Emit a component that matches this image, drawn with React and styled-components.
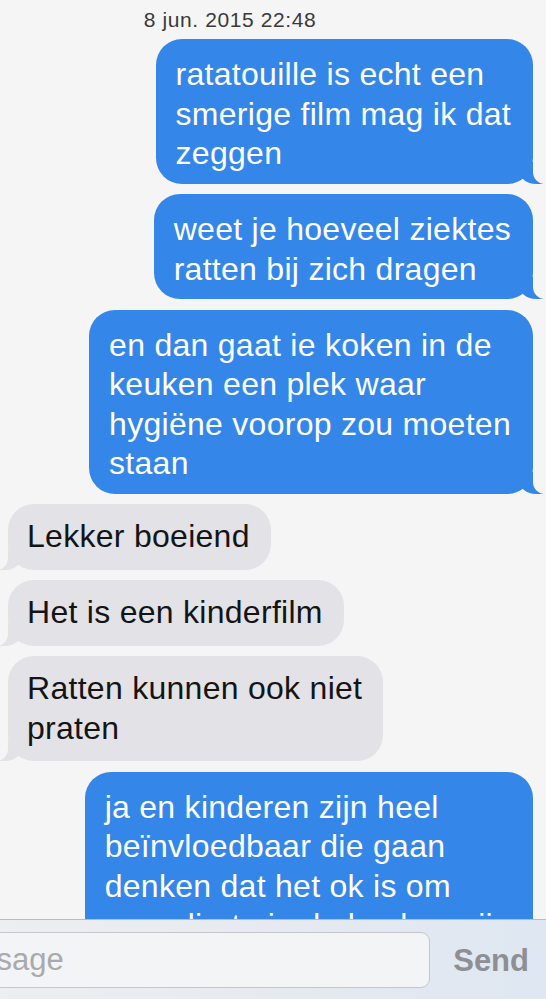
import React from "react";
import styled, { createGlobalStyle, css } from "styled-components";

const PAGE_BG = "#f5f5f5";
const BLUE = "#3487e9";
const GRAY = "#e2e2e7";

const Global = createGlobalStyle`
  html, body { margin: 0; padding: 0; background: ${PAGE_BG}; }
  body { font-family: "Liberation Sans", Arial, Helvetica, sans-serif; }
`;

const Screen = styled.div`
  width: 546px;
  height: 999px;
  display: flex;
  flex-direction: column;
  overflow: hidden;
  background: ${PAGE_BG};
`;

const Thread = styled.div`
  flex: 1;
  min-height: 0;
  overflow: hidden;
  display: flex;
  flex-direction: column;
  padding-top: 8px;
`;

const Stamp = styled.div`
  font-size: 21px;
  line-height: 24px;
  letter-spacing: 0.6px;
  color: #3a3a3a;
  text-align: center;
  padding-right: 86px;
  margin-bottom: 7px;
`;

const Messages = styled.div`
  display: flex;
  flex-direction: column;
  gap: 10.5px;
`;

const sentTail = css`
  &::before {
    content: "";
    position: absolute;
    bottom: 0;
    right: -10px;
    width: 24px;
    height: 22px;
    background: ${BLUE};
    border-bottom-left-radius: 17px 14px;
  }
  &::after {
    content: "";
    position: absolute;
    bottom: 0;
    right: -14px;
    width: 14px;
    height: 24px;
    background: ${PAGE_BG};
    border-bottom-left-radius: 12px;
  }
`;

const receivedTail = css`
  &::before {
    content: "";
    position: absolute;
    bottom: 0;
    left: -10px;
    width: 24px;
    height: 22px;
    background: ${GRAY};
    border-bottom-right-radius: 17px 14px;
  }
  &::after {
    content: "";
    position: absolute;
    bottom: 0;
    left: -14px;
    width: 14px;
    height: 24px;
    background: ${PAGE_BG};
    border-bottom-right-radius: 12px;
  }
`;

const Bubble = styled.div`
  position: relative;
  align-self: ${(p) => (p.$me ? "flex-end" : "flex-start")};
  margin: ${(p) => (p.$me ? "0 13px 0 0" : "0 0 0 8px")};
  padding: ${(p) => (p.$me ? "16px 22px 10px 20px" : "13px 21px 13px 19px")};
  background: ${(p) => (p.$me ? BLUE : GRAY)};
  color: ${(p) => (p.$me ? "#ffffff" : "#141414")};
  border-radius: 26px;
  font-size: 32px;
  line-height: 39.5px;
  letter-spacing: 0.28px;
  white-space: nowrap;
  ${(p) => (p.$me ? sentTail : receivedTail)}
`;

const BubbleText = styled.span`
  position: relative;
  z-index: 1;
`;

const Bar = styled.div`
  flex: none;
  height: 80px;
  box-sizing: border-box;
  border-top: 1px solid #b9bbbf;
  background: linear-gradient(90deg, #eceef1 0%, #e6eaf0 50%, #dee7f2 100%);
  display: flex;
  align-items: flex-start;
  padding-top: 12px;
`;

const Input = styled.div`
  flex: none;
  margin-left: -77px;
  width: 507px;
  height: 56px;
  box-sizing: border-box;
  border: 1px solid #c4c6cb;
  border-radius: 9px;
  background: #f3f4f6;
  display: flex;
  align-items: center;
  padding-left: 14px;
  font-size: 31px;
  color: #a9a9ae;
`;

const Send = styled.div`
  margin-left: auto;
  padding-right: 17px;
  height: 58px;
  line-height: 58px;
  font-size: 31px;
  font-weight: bold;
  color: #8e8e93;
`;

const messages = [
  { me: true, lines: ["ratatouille is echt een", "smerige film mag ik dat", "zeggen"] },
  { me: true, lines: ["weet je hoeveel ziektes", "ratten bij zich dragen"] },
  {
    me: true,
    lines: ["en dan gaat ie koken in de", "keuken een plek waar", "hygiëne voorop zou moeten", "staan"],
  },
  { me: false, lines: ["Lekker boeiend"] },
  { me: false, lines: ["Het is een kinderfilm"] },
  { me: false, lines: ["Ratten kunnen ook niet", "praten"] },
  {
    me: true,
    lines: [
      "ja en kinderen zijn heel",
      "beïnvloedbaar die gaan",
      "denken dat het ok is om",
      "ongedierte in de keuken zijn",
    ],
  },
];

export default function App() {
  return (
    <>
      <Global />
      <Screen>
        <Thread>
          <Stamp>8 jun. 2015 22:48</Stamp>
          <Messages>
            {messages.map((m, i) => (
              <Bubble key={i} $me={m.me}>
                <BubbleText>
                  {m.lines.map((l, j) => (
                    <React.Fragment key={j}>
                      {j > 0 && <br />}
                      {l}
                    </React.Fragment>
                  ))}
                </BubbleText>
              </Bubble>
            ))}
          </Messages>
        </Thread>
        <Bar>
          <Input>Message</Input>
          <Send>Send</Send>
        </Bar>
      </Screen>
    </>
  );
}
